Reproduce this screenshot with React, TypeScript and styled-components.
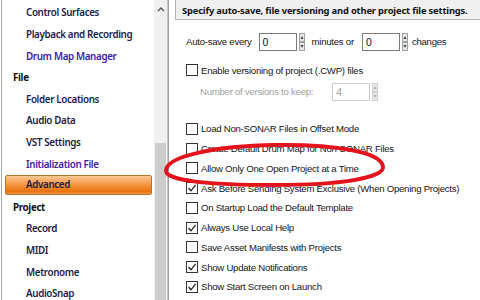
import React from "react";
import styled, { createGlobalStyle } from "styled-components";

const Global = createGlobalStyle`
  html, body { margin: 0; padding: 0; background: #ffffff; }
  body { font-family: "Noto Sans", "Liberation Sans", sans-serif; }
`;

const Window = styled.div`
  width: 480px;
  height: 300px;
  overflow: hidden;
  display: flex;
  background: #ffffff;
  position: relative;
`;

const LeftPane = styled.div`
  width: 168px;
  display: flex;
  flex: none;
`;

const Tree = styled.div`
  flex: 1;
  margin-left: 1px;
  border-left: 1px solid #a8a8a8;
  padding: 2.2px 2px 0 3px;
  display: flex;
  flex-direction: column;
`;

const TreeRow = styled.div<{ $level: number; $tone: "normal" | "link" | "header"; $selected?: boolean }>`
  height: 21.6px;
  flex: none;
  display: flex;
  align-items: center;
  box-sizing: border-box;
  padding-left: ${(p) => (p.$level === 0 ? 8 : 21)}px;
  font-size: 9.8px;
  letter-spacing: -0.35px;
  font-weight: ${(p) => (p.$tone === "header" ? 700 : 600)};
  color: ${(p) =>
    p.$tone === "header" ? "#111111" : p.$tone === "link" ? "#3a22a8" : "#1c1c48"};
  white-space: nowrap;
  border-radius: 2px;
  ${(p) =>
    p.$selected
      ? `
    background: linear-gradient(to bottom, #fbc893 0%, #f7a35a 35%, #f08a2c 60%, #e8720e 88%, #f09a4a 100%);
    border: 1px solid #b8742c;
    padding-left: 20px;
    height: 20px;
    margin-bottom: 1.6px;
  `
      : ""}
`;

const Scrollbar = styled.div`
  width: 13px;
  flex: none;
  background: #f0f0f0;
  display: flex;
  flex-direction: column;
  border-right: 1px solid #c4c4c4;
`;

const ScrollArrow = styled.div`
  height: 17px;
  display: flex;
  align-items: center;
  justify-content: center;
`;

const ScrollGap = styled.div`
  height: 126px;
`;

const Thumb = styled.div`
  flex: 1;
  margin: 0 1px;
  background: #cdcdcd;
`;

const RightPane = styled.div`
  flex: 1;
  border-left: 1px solid #a0a0a0;
  padding-left: 6px;
  display: flex;
  flex-direction: column;
  font-family: "Liberation Sans", Arial, sans-serif;
  color: #1a1a1a;
`;

const Header = styled.div`
  height: 21px;
  box-sizing: border-box;
  margin-top: -1px;
  border: 1px solid #b4b4b4;
  border-right: none;
  background: #f0f0f0;
  display: flex;
  align-items: center;
  padding: 1px 0 0 6px;
  font-family: "Noto Sans", sans-serif;
  font-weight: 700;
  font-size: 9.4px;
  letter-spacing: -0.18px;
  color: #111111;
  white-space: nowrap;
`;

const Body = styled.div`
  padding-left: 11px;
  display: flex;
  flex-direction: column;
`;

const FieldRow = styled.div<{ $top: number; $indent?: number; $h?: number }>`
  margin-top: ${(p) => p.$top}px;
  padding-left: ${(p) => p.$indent ?? 0}px;
  height: ${(p) => p.$h ?? 19}px;
  display: flex;
  align-items: center;
  font-size: 9.6px;
  letter-spacing: -0.25px;
  white-space: nowrap;
`;

const Label = styled.span<{ $disabled?: boolean; $gap?: number }>`
  color: ${(p) => (p.$disabled ? "#a0a0a0" : "#151515")};
  margin-right: ${(p) => p.$gap ?? 0}px;
`;

const NumberBox = styled.div<{ $disabled?: boolean }>`
  width: 38px;
  height: 18px;
  box-sizing: border-box;
  border: 1px solid ${(p) => (p.$disabled ? "#cccccc" : "#7a7a7a")};
  background: #ffffff;
  display: flex;
  align-items: center;
  padding-left: 3px;
  color: ${(p) => (p.$disabled ? "#a0a0a0" : "#111111")};
  font-size: 10.5px;
  letter-spacing: 0;
`;

const SpinWrap = styled.div<{ $gap: number }>`
  margin: 0 ${(p) => p.$gap}px 0 2px;
  display: flex;
`;

const List = styled.div`
  margin-top: 18px;
  display: flex;
  flex-direction: column;
`;

const CheckRow = styled.div`
  height: 19.75px;
  display: flex;
  align-items: center;
  font-size: 9.6px;
  letter-spacing: -0.25px;
  white-space: nowrap;
`;

const Box = styled.div`
  width: 12px;
  height: 12px;
  box-sizing: border-box;
  border: 1px solid #333333;
  background: #ffffff;
  margin-right: 3px;
  flex: none;
  display: flex;
  align-items: center;
  justify-content: center;
`;

const Overlay = styled.svg`
  position: absolute;
  left: 0;
  top: 0;
  pointer-events: none;
`;

const Spinner = ({ disabled }: { disabled?: boolean }) => {
  const c = disabled ? "#b0b0b0" : "#444444";
  const s = disabled ? "#d0d0d0" : "#a0a0a0";
  return (
    <svg width="6" height="18" viewBox="0 0 6 18">
      <rect x="0.5" y="0.5" width="5" height="8" fill="#e8e8e8" stroke={s} />
      <rect x="0.5" y="9.5" width="5" height="8" fill="#e8e8e8" stroke={s} />
      <path d="M1.5 6 L3 3 L4.5 6 Z" fill={c} />
      <path d="M1.5 12 L3 15 L4.5 12 Z" fill={c} />
    </svg>
  );
};

const Check = ({ checked, label }: { checked?: boolean; label: string }) => (
  <CheckRow>
    <Box>
      {checked && (
        <svg width="10" height="10" viewBox="0 0 10 10">
          <path d="M1.5 5 L4 7.8 L8.6 1.8" fill="none" stroke="#222222" strokeWidth="1.3" />
        </svg>
      )}
    </Box>
    <Label>{label}</Label>
  </CheckRow>
);

type Item = { text: string; level: number; tone: "normal" | "link" | "header"; selected?: boolean };

const items: Item[] = [
  { text: "Control Surfaces", level: 1, tone: "normal" },
  { text: "Playback and Recording", level: 1, tone: "normal" },
  { text: "Drum Map Manager", level: 1, tone: "link" },
  { text: "File", level: 0, tone: "header" },
  { text: "Folder Locations", level: 1, tone: "normal" },
  { text: "Audio Data", level: 1, tone: "normal" },
  { text: "VST Settings", level: 1, tone: "normal" },
  { text: "Initialization File", level: 1, tone: "link" },
  { text: "Advanced", level: 1, tone: "normal", selected: true },
  { text: "Project", level: 0, tone: "header" },
  { text: "Record", level: 1, tone: "normal" },
  { text: "MIDI", level: 1, tone: "normal" },
  { text: "Metronome", level: 1, tone: "normal" },
  { text: "AudioSnap", level: 1, tone: "normal" },
];

const checks: { label: string; checked?: boolean }[] = [
  { label: "Load Non-SONAR Files in Offset Mode" },
  { label: "Create Default Drum Map for Non-SONAR Files" },
  { label: "Allow Only One Open Project at a Time" },
  { label: "Ask Before Sending System Exclusive (When Opening Projects)", checked: true },
  { label: "On Startup Load the Default Template" },
  { label: "Always Use Local Help", checked: true },
  { label: "Save Asset Manifests with Projects" },
  { label: "Show Update Notifications", checked: true },
  { label: "Show Start Screen on Launch", checked: true },
];

export default function App() {
  return (
    <>
      <Global />
      <Window>
        <LeftPane>
          <Tree>
            {items.map((it) => (
              <TreeRow key={it.text} $level={it.level} $tone={it.tone} $selected={it.selected}>
                {it.text}
              </TreeRow>
            ))}
          </Tree>
          <Scrollbar>
            <ScrollArrow>
              <svg width="8" height="6" viewBox="0 0 8 6">
                <path d="M1 5 L4 2 L7 5" fill="none" stroke="#555555" strokeWidth="1.4" />
              </svg>
            </ScrollArrow>
            <ScrollGap />
            <Thumb />
          </Scrollbar>
        </LeftPane>
        <RightPane>
          <Header>Specify auto-save, file versioning and other project file settings.</Header>
          <Body>
            <FieldRow $top={12}>
              <Label $gap={7}>Auto-save every</Label>
              <NumberBox>0</NumberBox>
              <SpinWrap $gap={7}>
                <Spinner />
              </SpinWrap>
              <Label $gap={8}>minutes or</Label>
              <NumberBox>0</NumberBox>
              <SpinWrap $gap={4}>
                <Spinner />
              </SpinWrap>
              <Label>changes</Label>
            </FieldRow>
            <FieldRow $top={9} $h={20}>
              <Box />
              <Label>Enable versioning of project (.CWP) files</Label>
            </FieldRow>
            <FieldRow $top={2} $indent={14}>
              <Label $disabled $gap={19}>Number of versions to keep:</Label>
              <NumberBox $disabled>4</NumberBox>
              <SpinWrap $gap={0}>
                <Spinner disabled />
              </SpinWrap>
            </FieldRow>
            <List>
              {checks.map((c) => (
                <Check key={c.label} label={c.label} checked={c.checked} />
              ))}
            </List>
          </Body>
        </RightPane>
        <Overlay width="480" height="300" viewBox="0 0 480 300">
          <path
            d="M166 170 C 168 156, 215 146, 275 145 C 335 144, 382 152, 383 167 C 384 178, 340 185, 275 185 C 210 185, 164 181, 166 170 Z"
            fill="none"
            stroke="#e3121b"
            strokeWidth="4"
          />
        </Overlay>
      </Window>
    </>
  );
}
